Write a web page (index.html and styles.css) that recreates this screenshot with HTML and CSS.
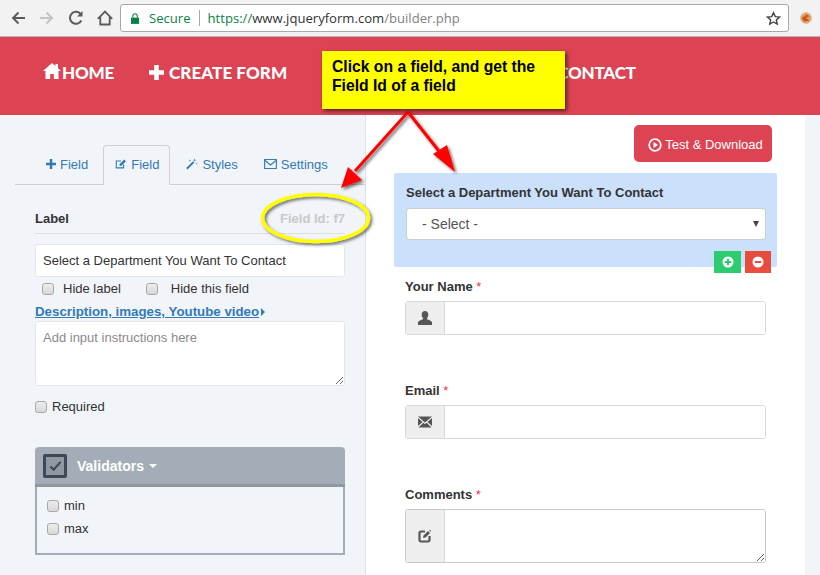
FILE: index.html
```html
<!DOCTYPE html>
<html lang="en">
<head>
<meta charset="utf-8">
<title>Form builder</title>
<link rel="stylesheet" href="styles.css">
</head>
<body>
<div class="page">
  <header class="chrome">
    <div class="chrome-nav">
      <svg class="cicon" viewBox="0 0 16 16"><path d="M15 8H3M8.500 2.500 3 8l5.500 5.500" fill="none" stroke="#5a5a5a" stroke-width="1.900"/></svg>
      <svg class="cicon" viewBox="0 0 16 16"><path d="M1 8h12M7.500 2.500 13 8l-5.500 5.500" fill="none" stroke="#c4c4c4" stroke-width="1.900"/></svg>
      <svg class="cicon" viewBox="0 0 16 16"><path d="M13.300 10.500A6 6 0 1 1 13 4.600" fill="none" stroke="#5a5a5a" stroke-width="2"/><path d="M14.500 1v5.500H9z" fill="#5a5a5a"/></svg>
      <svg class="cicon home-c" viewBox="0 0 16 16"><path d="M.8 8.800 8 1.500l7.200 7.300M3.300 7v7.500h9.400V7" fill="none" stroke="#5a5a5a" stroke-width="1.800"/></svg>
    </div>
    <div class="omnibox">
      <svg class="lock" viewBox="0 0 10 12"><path d="M0 5h9v7H0z" fill="#0b8043"/><path d="M2 5V3.200a2.500 2.500 0 0 1 5 0V5" fill="none" stroke="#0b8043" stroke-width="1.200"/></svg>
      <span class="secure">Secure</span>
      <span class="url"><span class="u-scheme">https://</span><span class="u-host">www.jqueryform.com</span><span class="u-path">/builder.php</span></span>
      <svg class="star" viewBox="0 0 16 16"><path d="M8 1.800l1.900 4.200 4.500.5-3.400 3 1 4.500L8 11.700 4 14l1-4.500-3.400-3 4.500-.5z" fill="none" stroke="#444" stroke-width="1.500"/></svg>
    </div>
    <svg class="ext" viewBox="0 0 16 16"><circle cx="8" cy="8" r="6" fill="#e9a15c"/><path d="M3 8l6-4 3 2-4 2 4 3-6 1z" fill="#c9571c"/><circle cx="8" cy="8" r="6.500" fill="none" stroke="#cfc8b8"/></svg>
  </header>

  <nav class="topnav">
    <a class="nav-item"><svg class="nav-home" viewBox="0 0 18 16"><path d="M9 0 0 8h2.500v8h4.700v-5h3.600v5h4.700V8H18l-3-2.700V1h-2.500v2.100z" fill="#fff"/></svg>HOME</a>
    <a class="nav-item nav-create"><svg class="nav-plus" viewBox="0 0 15 15"><path d="M5.200 0h4.600v5.200H15v4.600H9.800V15H5.200V9.800H0V5.200h5.200z" fill="#fff"/></svg>CREATE FORM</a>
    <a class="nav-item nav-contact">CONTACT</a>
  </nav>

  <main class="workspace">
    <section class="sidebar">
      <ul class="tabs">
        <li class="tab"><svg class="tab-icon tab-icon-plus" viewBox="0 0 12 12"><path d="M4.500 0h3v4.500H12v3H7.500V12h-3V7.500H0v-3h4.500z" fill="#337ab7"/></svg>Field</li>
        <li class="tab tab-active"><svg class="tab-icon" viewBox="0 0 14 13"><path d="M10 7v4H1.500V3H7" fill="none" stroke="#337ab7" stroke-width="1.300"/><path d="M5.500 6.500 10.800 1.200l2 2L7.500 8.500l-2.300.3z" fill="#337ab7"/></svg>Field</li>
        <li class="tab"><svg class="tab-icon" viewBox="0 0 14 13"><path d="M1 12 9 4" stroke="#337ab7" stroke-width="2.200"/><path d="M10 0l.5 1.500L12 2l-1.500.5L10 4l-.5-1.500L8 2l1.500-.5zM4.500 1l.4 1 1 .4-1 .4-.4 1-.4-1-1-.4 1-.4zM12.500 5l.3 1 1 .3-1 .3-.3 1-.3-1-1-.3 1-.3z" fill="#337ab7"/></svg>Styles</li>
        <li class="tab"><svg class="tab-icon tab-icon-mail" viewBox="0 0 14 11"><path d="M.7.700h12.600v9.600H.7z" fill="none" stroke="#337ab7" stroke-width="1.200"/><path d="M.7 1.500 7 6.500l6.300-5" fill="none" stroke="#337ab7" stroke-width="1.200"/></svg>Settings</li>
      </ul>
      <div class="editor">
        <div class="label-row"><span class="label-title">Label</span><span class="field-id">Field Id: f7</span></div>
        <input class="text-input" type="text" value="Select a Department You Want To Contact">
        <div class="hide-row">
          <label class="check"><input type="checkbox" class="cb">Hide label</label>
          <label class="check"><input type="checkbox" class="cb">Hide this field</label>
        </div>
        <div class="desc-row"><a class="desc-link">Description, images, Youtube video</a><span class="desc-caret"></span></div>
        <textarea class="desc-area" placeholder="Add input instructions here"></textarea>
        <label class="check required"><input type="checkbox" class="cb">Required</label>
        <div class="validators">
          <div class="val-head">
            <span class="val-box"><svg viewBox="0 0 14 12"><path d="M1.500 6.500 5 10l7.500-8.500" fill="none" stroke="#3f4854" stroke-width="2.200"/></svg></span>
            <span class="val-title">Validators</span><span class="val-caret"></span>
          </div>
          <div class="val-body">
            <label class="check"><input type="checkbox" class="cb">min</label>
            <label class="check"><input type="checkbox" class="cb">max</label>
          </div>
        </div>
      </div>
    </section>

    <section class="canvas">
      <div class="canvas-actions">
        <button class="test-btn" type="button"><svg class="play" viewBox="0 0 14 14"><circle cx="7" cy="7" r="5.800" fill="none" stroke="#fff" stroke-width="1.700"/><path d="M5.500 4v6L10 7z" fill="#fff"/></svg>Test &amp; Download</button>
      </div>
      <div class="field field-selected">
        <div class="field-label">Select a Department You Want To Contact</div>
        <div class="select-box"><span>- Select -</span><span class="select-arrow"></span></div>
        <div class="field-tools">
          <span class="tool tool-add"><svg viewBox="0 0 12 12"><circle cx="6" cy="6" r="5.500" fill="#fff"/><path d="M5 2.800h2V5h2.200v2H7v2.200H5V7H2.800V5H5z" fill="#2ecc71"/></svg></span>
          <span class="tool tool-del"><svg viewBox="0 0 12 12"><circle cx="6" cy="6" r="5.500" fill="#fff"/><path d="M2.800 5h6.400v2H2.800z" fill="#e74c3c"/></svg></span>
        </div>
      </div>
      <div class="field form-field">
        <div class="form-label">Your Name <span class="req">*</span></div>
        <div class="group">
          <span class="addon"><svg class="addon-icon" viewBox="0 0 14 14"><path d="M7 0c2.200 0 3.300 1.600 3.300 3.700 0 1.400-.5 2.600-1.300 3.400v1.200c2 .7 4.300 1.600 5 3V14H0v-2.700c.7-1.400 3-2.300 5-3V7.100C4.200 6.300 3.700 5.100 3.700 3.700 3.700 1.600 4.800 0 7 0z" fill="#555"/></svg></span>
          <input class="group-input" type="text">
        </div>
      </div>
      <div class="field form-field">
        <div class="form-label">Email <span class="req">*</span></div>
        <div class="group">
          <span class="addon"><svg class="addon-icon" viewBox="0 0 14 11"><path d="M0 0h14L7 6z" fill="#555"/><path d="M0 1.500 4.500 5.500 0 9.500zM14 1.500 9.500 5.500l4.500 4zM5.300 6.200 7 7.600l1.700-1.400 4.800 4.800H.5z" fill="#555"/></svg></span>
          <input class="group-input" type="text">
        </div>
      </div>
      <div class="field form-field">
        <div class="form-label">Comments <span class="req">*</span></div>
        <div class="group group-area">
          <span class="addon"><svg class="addon-icon" viewBox="0 0 14 14"><path d="M7 2.500H3A1.500 1.500 0 0 0 1.500 4v7A1.500 1.500 0 0 0 3 12.500h7a1.500 1.500 0 0 0 1.500-1.500V7" fill="none" stroke="#555" stroke-width="2.200"/><path d="M5.500 6.500 10 2l2 2-4.500 4.500-2.500.5zM12 .8l1.200 1.200-.8.800-1.200-1.200z" fill="#555"/></svg></span>
          <textarea class="group-text"></textarea>
        </div>
      </div>
    </section>
    <aside class="gutter"></aside>
  </main>

  <svg class="annotations" viewBox="0 0 820 575">
    <defs>
      <filter id="sh" x="-30%" y="-30%" width="160%" height="160%"><feDropShadow dx="2" dy="2" stdDeviation="1.500" flood-color="#000" flood-opacity=".55"/></filter>
    </defs>
    <g filter="url(#sh)">
      <path d="M408 112 355 171" stroke="#f00" stroke-width="3" fill="none"/>
      <path d="M341 188 348 167 362 180z" fill="#f00"/>
      <path d="M408 112 442 155" stroke="#f00" stroke-width="3" fill="none"/>
      <path d="M455 172 433 154 447 145z" fill="#f00"/>
    </g>
    <ellipse cx="315.500" cy="218" rx="53" ry="23.500" fill="none" stroke="#ff0" stroke-width="3.500" filter="url(#sh)"/>
  </svg>
  <div class="callout">Click on a field, and get the Field Id of a field</div>
</div>
</body>
</html>
```
FILE: styles.css
```css
* { box-sizing: border-box; }
html, body { margin: 0; padding: 0; }
body { font-family: "Liberation Sans", Arial, sans-serif; color: #333; background: #fff; }
.page { position: relative; width: 820px; height: 575px; overflow: hidden; display: flex; flex-direction: column; }

.chrome { height: 37px; flex: none; display: flex; align-items: flex-start; background: #f2f2f2; border-bottom: 1px solid #b8b8b8; padding: 4px 0 0 10px; }
.chrome-nav { display: flex; gap: 13px; width: 110px; padding-top: 6px; }
.cicon { width: 16px; height: 16px; flex: none; }
.omnibox { width: 669px; height: 28px; background: #fff; border: 1px solid #a9a9a9; border-radius: 3px; display: flex; align-items: center; padding-left: 10px; font-family: "Open Sans", sans-serif; font-size: 13.100px; }
.lock { width: 9px; height: 11px; flex: none; margin-right: 9px; }
.secure { color: #0b8043; padding-right: 8px; margin-right: 8px; border-right: 1px solid #a9a9a9; line-height: 16px; }
.url { flex: 1; white-space: nowrap; }
.u-scheme { color: #0b8043; }
.u-host { color: #333; }
.u-path { color: #808080; }
.star { width: 15px; height: 15px; flex: none; margin-right: 7px; }
.ext { width: 14px; height: 14px; flex: none; margin: 7px 0 0 10px; }

.topnav { height: 78px; flex: none; background: #dc4454; display: flex; align-items: center; padding: 0 0 8px 43px; }
.nav-item { display: flex; align-items: center; color: #fff; font-family: Lato, sans-serif; font-weight: 900; font-size: 17px; letter-spacing: -.2px; white-space: nowrap; }
.nav-home { width: 18px; height: 16px; margin-right: 1px; margin-top: -2px; }
.nav-plus { width: 15px; height: 15px; margin-right: 5px; }
.nav-create { margin-left: 35px; letter-spacing: .07px; }
.nav-contact { margin-left: 270px; }

.workspace { flex: 1; display: flex; min-height: 0; }
.sidebar { width: 366px; flex: none; background: #f1f4f8; border-right: 1px solid #dcdfe3; padding-top: 30px; }
.tabs { list-style: none; margin: 0 0 0 15px; padding: 0 0 0 31px; height: 40px; display: flex; border-bottom: 1px solid #ccd0d4; font-size: 13px; line-height: 15px; color: #337ab7; }
.tab { height: 40px; display: flex; align-items: center; padding: 0 0 2px; margin-right: 26px; }
.tab:first-child { margin-right: 15px; }
.tab-icon { width: 12px; height: 12px; margin-right: 4px; flex: none; }
.tab-icon-plus { width: 10px; height: 10px; }
.tab-icon-mail { width: 13px; }
.tab-active { margin-right: 16px; padding: 0 10px 2px 11px; background: #f1f4f8; border: 1px solid #ccd0d4; border-bottom-color: #f1f4f8; border-radius: 4px 4px 0 0; }

.editor { padding: 0 20px 0 35px; font-size: 13px; }
.label-row { height: 49px; display: flex; justify-content: space-between; align-items: center; border-bottom: 1px solid #dcdfe3; padding-top: 18px; font-weight: 700; font-size: 13px; }
.label-title { color: #333; }
.field-id { color: #c9c9c9; white-space: nowrap; }
.text-input { display: block; width: 310px; height: 33px; margin-top: 10px; border: 1px solid #e4e7ea; border-radius: 3px; padding: 0 7px; font: 13px "Liberation Sans", sans-serif; color: #333; background: #fff; }
.hide-row { display: flex; gap: 25px; padding: 6px 0 0 7px; height: 26px; }
.check { display: flex; align-items: center; height: 12px; line-height: 12px; color: #333; }
.cb { appearance: none; -webkit-appearance: none; width: 12px; height: 12px; margin: 0; flex: none; border: 1px solid #a9a9a9; border-radius: 3px; background: linear-gradient(#ededed, #d8d8d8); }
.hide-row .cb { margin-right: 9px; }
.hide-row .check + .check .cb { margin-right: 13px; }
.desc-row { display: flex; align-items: center; height: 17px; }
.desc-link { color: #337ab7; font-weight: 700; font-size: 13.300px; text-decoration: underline; }
.desc-caret { width: 0; height: 0; margin-left: 2px; border-left: 4px solid #337ab7; border-top: 4px solid transparent; border-bottom: 4px solid transparent; }
.desc-area { display: block; width: 310px; height: 65px; margin-top: 1px; border: 1px solid #e4e7ea; border-radius: 3px; padding: 8px 7px; font: 13px "Liberation Sans", sans-serif; background: #fff; }
.desc-area::placeholder { color: #8a8a8a; }
.required { margin-top: 15px; gap: 5px; }
.validators { margin-top: 34px; width: 310px; height: 108px; border-radius: 4px 4px 0 0; border: 2px solid #a4adb7; border-top: 0; display: flex; flex-direction: column; }
.val-head { height: 40px; flex: none; margin: 0 -2px; background: #a4adb7; border-bottom: 3px solid #8f989f; border-radius: 5px 5px 0 0; display: flex; align-items: center; padding-left: 8px; }
.val-box { width: 24px; height: 24px; border: 3px solid #3f4854; border-radius: 2px; background: #8f98a3; display: flex; align-items: center; justify-content: center; }
.val-box svg { width: 13px; height: 12px; }
.val-title { margin-left: 10px; color: #fff; font-weight: 700; font-size: 14px; }
.val-caret { margin-left: 5px; width: 0; height: 0; border-top: 4px solid #fff; border-left: 4.500px solid transparent; border-right: 4.500px solid transparent; }
.val-body { padding: 13px 0 0 10px; display: flex; flex-direction: column; gap: 11px; }
.val-body .cb { margin-right: 5px; }

.canvas { width: 439px; flex: none; background: #fff; padding: 10px 0 0 28px; }
.canvas-actions { display: flex; justify-content: flex-end; padding-right: 33px; }
.test-btn { width: 138px; height: 37px; border: 0; border-radius: 5px; background: #dc4454; color: #fff; font: 13px "Liberation Sans", sans-serif; display: flex; align-items: center; justify-content: center; padding: 2px 0 0 5px; }
.play { width: 14px; height: 14px; margin-right: 3px; }
.field { position: relative; }
.field-selected { margin-top: 11px; width: 383px; height: 94px; background: #cbe0fb; border-radius: 2px; padding: 11px 11px 0 12px; }
.field-label { font-size: 13px; font-weight: 700; color: #333; height: 24px; line-height: 17px; }
.select-box { width: 360px; height: 32px; background: #fff; border: 1px solid #c9ced4; border-radius: 4px; display: flex; align-items: center; justify-content: space-between; padding: 0 6px 0 15px; font-size: 14px; color: #555; }
.select-arrow { width: 0; height: 0; border-top: 6px solid #444; border-left: 3.500px solid transparent; border-right: 3.500px solid transparent; }
.field-tools { position: absolute; right: 6px; top: 78px; display: flex; gap: 4px; }
.tool { height: 22px; display: flex; align-items: center; justify-content: center; }
.tool svg { width: 12px; height: 12px; }
.tool-add { width: 27px; background: #2ecc71; }
.tool-del { width: 26px; background: #e74c3c; }
.form-field { margin: 10px 0 0 11px; width: 361px; padding-bottom: 46px; }
.form-field + .form-field { margin-top: 0; }
.form-label { height: 24px; font-size: 13px; font-weight: 700; line-height: 19px; color: #333; }
.req { color: #f0323c; font-weight: 400; }
.group { display: flex; height: 34px; border: 1px solid #d9d9d9; border-radius: 3px; overflow: hidden; }
.addon { width: 39px; flex: none; background: #eee; border-right: 1px solid #d9d9d9; display: flex; align-items: center; justify-content: center; }
.addon-icon { width: 14px; height: 14px; }
.group-input { flex: 1; border: 0; min-width: 0; background: #fff; }
.group-area { height: 54px; border-color: #c9c9c9; }
.group-text { flex: 1; border: 0; min-width: 0; background: #fff; }

.gutter { flex: 1; background: #f1f4f8; }

.annotations { position: absolute; left: 0; top: 0; width: 820px; height: 575px; pointer-events: none; }
.callout { position: absolute; left: 322px; top: 51px; width: 243px; height: 58px; background: #ff0; color: #000; font-size: 15.700px; font-weight: 700; line-height: 19px; padding: 6px 10px 0; box-shadow: 2px 2px 4px rgba(0,0,0,.6); }
```
